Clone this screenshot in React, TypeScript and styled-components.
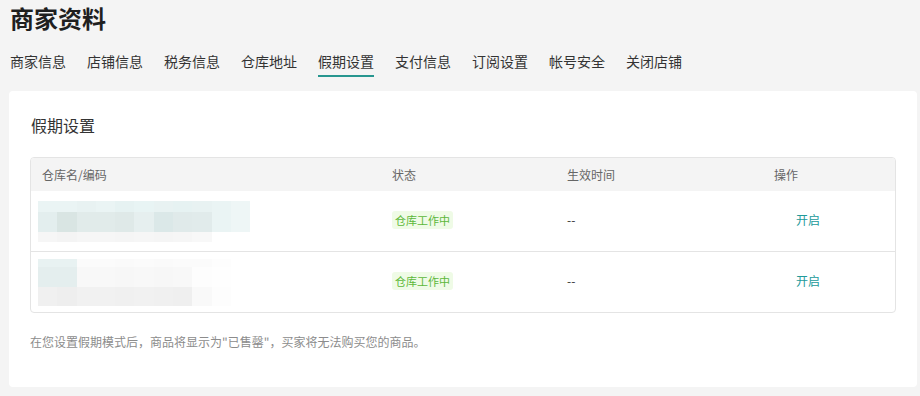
import styled, { createGlobalStyle } from 'styled-components';

const GlobalStyle = createGlobalStyle`
  html, body {
    margin: 0;
    padding: 0;
    background: #f4f4f4;
  }
  body {
    font-family: "Noto Sans CJK SC", "Noto Sans", "Liberation Sans", sans-serif;
    color: #333;
  }
`;

const TABS = ['商家信息', '店铺信息', '税务信息', '仓库地址', '假期设置', '支付信息', '订阅设置', '帐号安全', '关闭店铺'];
const ACTIVE_TAB = '假期设置';

type MosaicRow = { h: number; cells: string[] };

// blurred warehouse names, drawn as a coarse mosaic
const ROWS: { id: number; mosaic: MosaicRow[] }[] = [
  {
    id: 1,
    mosaic: [
      {
        h: 11,
        cells: ['#eaf4f4', '#eaf4f4', '#e8f2f2', '#eaf4f4', '#e6f2f2', '#e8f4f4', '#e8f2f2', '#e6f2f2', '#e8f2f2', '#eaf4f4', '#eef6f6'],
      },
      {
        h: 20,
        cells: ['#e3eeee', '#d9e5e3', '#e1ebea', '#e1ebea', '#dfe9e8', '#e6efef', '#dbe8e8', '#e0eaea', '#e1ebeb', '#eaf4f4', '#eef6f6'],
      },
      {
        h: 10,
        cells: ['#f6f6f6', '#f4f4f4', '#f6f6f6', '#f6f6f6', '#f5f5f5', '#f6f6f6', '#f5f5f5', '#f6f6f6', '#f8f8f8', '#fff', '#fff'],
      },
    ],
  },
  {
    id: 2,
    mosaic: [
      {
        h: 8,
        cells: ['#e8f2f2', '#e8f2f2', '#fbfbfb', '#fbfbfb', '#fafafa', '#fbfbfb', '#fafafa', '#fbfbfb', '#fbfbfb', '#fdfdfd', '#fff'],
      },
      {
        h: 20,
        cells: ['#e4eeee', '#e4eeee', '#f8f8f8', '#f8f8f8', '#f7f7f7', '#f8f8f8', '#f7f7f7', '#f8f8f8', '#fdfdfd', '#fefefe', '#fff'],
      },
      {
        h: 19,
        cells: ['#f0f0f0', '#eeeeee', '#f1f1f1', '#f1f1f1', '#f0f0f0', '#f1f1f1', '#f0f0f0', '#efefef', '#f9f9f9', '#fdfdfd', '#fff'],
      },
    ],
  },
];

function Mosaic({ rows }: { rows: MosaicRow[] }) {
  return (
    <MosaicBox>
      {rows.map((row, i) => (
        <MosaicLine key={i} $h={row.h}>
          {row.cells.map((c, j) => (
            <MosaicCell key={j} $c={c} />
          ))}
        </MosaicLine>
      ))}
    </MosaicBox>
  );
}

function App() {
  return (
    <>
      <GlobalStyle />
      <Page>
        <PageTitle>商家资料</PageTitle>
        <TabBar>
          {TABS.map((t) => (
            <Tab key={t} $active={t === ACTIVE_TAB}>
              {t}
            </Tab>
          ))}
        </TabBar>
        <Card>
          <CardTitle>假期设置</CardTitle>
          <Table>
            <HeadRow>
              <HeadCell>仓库名/编码</HeadCell>
              <HeadCell>状态</HeadCell>
              <HeadCell>生效时间</HeadCell>
              <HeadCell>操作</HeadCell>
            </HeadRow>
            {ROWS.map((r, i) => (
              <BodyRow key={r.id} $first={i === 0}>
                <NameCell>
                  <Mosaic rows={r.mosaic} />
                </NameCell>
                <Cell>
                  <Badge>仓库工作中</Badge>
                </Cell>
                <Cell>--</Cell>
                <Cell>
                  <ActionLink>开启</ActionLink>
                </Cell>
              </BodyRow>
            ))}
          </Table>
          <Note>在您设置假期模式后，商品将显示为"已售罄"，买家将无法购买您的商品。</Note>
        </Card>
      </Page>
    </>
  );
}

export default App;

const Page = styled.div`
  padding: 0 3px 0 9px;
`;

const PageTitle = styled.h1`
  margin: 0;
  padding-left: 1px;
  height: 36px;
  line-height: 36px;
  font-size: 24px;
  font-weight: 700;
  color: #1f1f1f;
`;

const TabBar = styled.nav`
  display: flex;
  gap: 21px;
  margin: 14px 0 14px 1px;
`;

const Tab = styled.div<{ $active: boolean }>`
  font-size: 14px;
  line-height: 22px;
  padding-bottom: 3px;
  color: #333;
  border-bottom: 2px solid ${(p) => (p.$active ? '#27968f' : 'transparent')};
`;

const Card = styled.section`
  background: #fff;
  border-radius: 4px;
  padding: 22px 21px 36px 21px;
`;

const CardTitle = styled.h2`
  margin: 0 0 20px 1px;
  font-size: 16px;
  line-height: 24px;
  font-weight: 400;
  color: #333;
`;

const Table = styled.div`
  border: 1px solid #e4e4e4;
  border-radius: 4px;
  overflow: hidden;
`;

const HeadRow = styled.div`
  display: grid;
  grid-template-columns: 350px 175px 207px 1fr;
  height: 33px;
  align-items: center;
  background: #f4f4f4;
`;

const HeadCell = styled.div`
  padding-left: 11px;
  font-size: 12px;
  color: #666;
`;

const BodyRow = styled.div<{ $first: boolean }>`
  display: grid;
  grid-template-columns: 350px 175px 207px 1fr;
  height: 60px;
  align-items: center;
  border-top: ${(p) => (p.$first ? 'none' : '1px solid #e4e4e4')};
`;

const NameCell = styled.div`
  padding-left: 7px;
  display: flex;
  align-items: center;
`;

const Cell = styled.div`
  padding: 0 0 3px 11px;
  font-size: 12px;
  color: #333;
`;

const MosaicBox = styled.div`
  display: flex;
  flex-direction: column;
`;

const MosaicLine = styled.div<{ $h: number }>`
  display: flex;
  height: ${(p) => p.$h}px;
`;

const MosaicCell = styled.div<{ $c: string }>`
  width: 19.3px;
  background: ${(p) => p.$c};
`;

const Badge = styled.span`
  display: inline-block;
  padding: 0 3px;
  height: 18px;
  line-height: 18px;
  border-radius: 3px;
  background: #effbe6;
  color: #5cb83a;
  font-size: 11px;
`;

const ActionLink = styled.span`
  display: inline-block;
  padding-left: 22px;
  font-size: 12px;
  color: #229a9a;
  cursor: pointer;
`;

const Note = styled.p`
  margin: 20px 0 0 0;
  font-size: 12px;
  line-height: 18px;
  color: #8c8c8c;
`;
